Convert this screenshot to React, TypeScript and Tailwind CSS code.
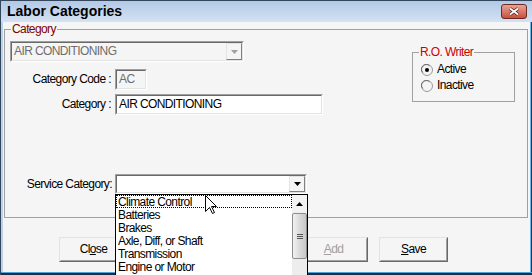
import React from "react";

type Kids = { children?: React.ReactNode; className?: string };

// sunken 3D edit box
function Sunken({ children, className = "" }: Kids) {
  return (
    <div className={`border border-t-[#a0a0a0] border-l-[#a0a0a0] border-b-white border-r-white ${className}`}>
      <div className="h-full w-full flex items-center border border-t-[#696969] border-l-[#696969] border-b-[#e3e3e3] border-r-[#e3e3e3]">
        {children}
      </div>
    </div>
  );
}

function Btn({ children }: Kids) {
  return (
    <div className="w-[69px] h-[25px] bg-[#f5f5f5] border border-t-[#e3e3e3] border-l-[#e3e3e3] border-b-[#696969] border-r-[#696969]">
      <div className="h-full flex items-center justify-center border border-t-[#f5f5f5] border-l-[#f5f5f5] border-b-[#a0a0a0] border-r-[#a0a0a0]">
        {children}
      </div>
    </div>
  );
}

function DropBtn({ disabled }: { disabled?: boolean }) {
  return (
    <div className="ml-auto w-[16px] h-full flex items-center justify-center bg-[#f5f5f5] border border-t-[#e3e3e3] border-l-[#e3e3e3] border-b-[#808080] border-r-[#808080]">
      <svg width="7" height="4" viewBox="0 0 7 4">
        <path d="M0 0h7L3.5 4z" fill={disabled ? "#a0a0a0" : "#000"} />
      </svg>
    </div>
  );
}

function Radio({ checked, label }: { checked?: boolean; label: string }) {
  return (
    <div className="flex items-center h-[13px]">
      <svg width="12" height="12" viewBox="0 0 12 12" className="ml-[8px]">
        <circle cx="6" cy="6" r="5.5" fill="#f4f4f4" stroke="#9a9a9a" />
        <path d="M1.8 8.5A4.6 4.6 0 0 1 8.5 1.8" fill="none" stroke="#6e6e6e" />
        {checked && <circle cx="6" cy="6" r="2" fill="#000" />}
      </svg>
      <span className="ml-[4px]">{label}</span>
    </div>
  );
}

const items = ["Climate Control", "Batteries", "Brakes", "Axle, Diff, or Shaft", "Transmission", "Engine or Motor"];

export default function App() {
  return (
    <div className="w-[532px] h-[275px] overflow-hidden flex flex-col bg-[#bcd2ea] border-t border-l border-[#34465c] font-['Liberation_Sans',Arial,sans-serif] text-[12px] leading-[13px] tracking-[-0.6px] text-black select-none">
      {/* title bar */}
      <div className="h-[21px] shrink-0 flex items-center bg-gradient-to-b from-[#b2c9e5] to-[#d4e2f2] pl-[6px] pr-[5px]">
        <span className="text-[14px] font-bold tracking-normal">Labor Categories</span>
        <div className="ml-auto w-[26px] h-[15px] rounded-[3px] border border-[#6e2a22] bg-gradient-to-b from-[#e9a395] to-[#c4503e] flex items-center justify-center">
          <svg width="12" height="9" viewBox="0 0 12 9">
            <path d="M2 1.5l8 6M10 1.5l-8 6" stroke="#5a1a12" strokeWidth="3.4" />
            <path d="M2 1.5l8 6M10 1.5l-8 6" stroke="#fff" strokeWidth="1.8" />
          </svg>
        </div>
      </div>

      <div className="flex">
        <div className="w-[2px]" />
        {/* client area */}
        <div className="w-[527px] h-[250px] bg-[#f5f5f5] flex flex-col">
          {/* Category group */}
          <div className="relative ml-[1px] mt-[7px] w-[524px] h-[189px] border border-[#a0a0a0]">
            <span className="absolute left-[6px] -top-[7px] px-[1px] bg-[#f5f5f5] text-[#800000]">Category</span>
            <div className="flex">
              <div className="flex flex-col">
                <Sunken className="ml-[5px] mt-[11px] w-[234px] h-[21px]">
                  <span className="pl-[2px] text-[#6d6d6d]">AIR CONDITIONING</span>
                  <DropBtn disabled />
                </Sunken>
                <div className="flex mt-[7px] h-[21px] items-center">
                  <span className="w-[106px] text-right">Category Code :</span>
                  <Sunken className="ml-[4px] w-[32px] h-[21px]">
                    <span className="pl-[2px] text-[#6d6d6d]">AC</span>
                  </Sunken>
                </div>
                <div className="flex mt-[4px] h-[21px] items-center">
                  <span className="w-[106px] text-right">Category :</span>
                  <Sunken className="ml-[4px] w-[208px] h-[21px] bg-white">
                    <span className="pl-[2px]">AIR CONDITIONING</span>
                  </Sunken>
                </div>
                <div className="flex mt-[59px] h-[20px] items-center">
                  <span className="w-[107px] text-right">Service Category:</span>
                  <div className="relative ml-[3px] w-[192px] h-[20px]">
                    <Sunken className="w-full h-full bg-white">
                      <DropBtn />
                    </Sunken>
                    {/* open list */}
                    <div className="absolute z-10 left-0 top-full w-[193px] h-[90px] bg-white border border-black flex">
                      <div className="w-[176px] flex flex-col">
                        {items.map((it, i) => (
                          <div
                            key={it}
                            className={`h-[13px] shrink-0 pl-[1px] ${i === 0 ? "border border-dotted border-black" : "border border-transparent"}`}
                          >
                            <span className="block leading-[12px]">{it}</span>
                          </div>
                        ))}
                      </div>
                      {/* scrollbar */}
                      <div className="w-[15px] bg-[#ededed] flex flex-col items-center">
                        <div className="h-[17px] w-full flex items-center justify-center bg-[#f3f3f3]">
                          <svg width="7" height="4" viewBox="0 0 7 4">
                            <path d="M0 4h7L3.5 0z" fill="#000" />
                          </svg>
                        </div>
                        <div className="mt-[1px] w-[15px] h-[46px] rounded-[2px] border border-[#8e8f8f] bg-gradient-to-r from-[#f2f2f2] via-[#dadada] to-[#c8c8c8] flex flex-col items-center justify-center gap-[1px]">
                          <div className="w-[6px] h-[1px] bg-[#555]" />
                          <div className="w-[6px] h-[1px] bg-[#555]" />
                          <div className="w-[6px] h-[1px] bg-[#555]" />
                        </div>
                      </div>
                      {/* mouse pointer */}
                      <svg className="absolute left-[89px] top-[0px]" width="13" height="20" viewBox="0 0 13 20">
                        <path d="M0.5 0.5V16.5L4.5 12.5L7.5 18.5L9.5 17.5L6.5 11.5H11.5Z" fill="#fff" stroke="#000" strokeLinejoin="round" />
                      </svg>
                    </div>
                  </div>
                </div>
              </div>

              {/* R.O. Writer group */}
              <div className="relative ml-auto mr-[12px] mt-[22px] w-[103px] h-[50px] border border-[#a0a0a0]">
                <span className="absolute left-[6px] -top-[7px] px-[1px] bg-[#f5f5f5] text-[#cc0000]">R.O. Writer</span>
                <div className="mt-[10px] flex flex-col gap-[3px]">
                  <Radio checked label="Active" />
                  <Radio label="Inactive" />
                </div>
              </div>
            </div>
          </div>

          {/* buttons */}
          <div className="flex mt-[19px] ml-[56px]">
            <Btn>
              <span>
                Cl<span className="underline">o</span>se
              </span>
            </Btn>
            <div className="ml-[171px]">
              <Btn>
                <span className="text-[#a0a0a0]">
                  <span className="underline">A</span>dd
                </span>
              </Btn>
            </div>
            <div className="ml-[11px]">
              <Btn>
                <span>
                  <span className="underline">S</span>ave
                </span>
              </Btn>
            </div>
          </div>
        </div>
        <div className="w-[1px] h-[250px] bg-[#6fb6e6]" />
        <div className="w-[1px] h-[250px] bg-[#2a3a4e]" />
      </div>
      <div className="h-[1px] bg-[#4aa3dc]" />
      <div className="flex-1 bg-[#1f2d3d]" />
    </div>
  );
}
